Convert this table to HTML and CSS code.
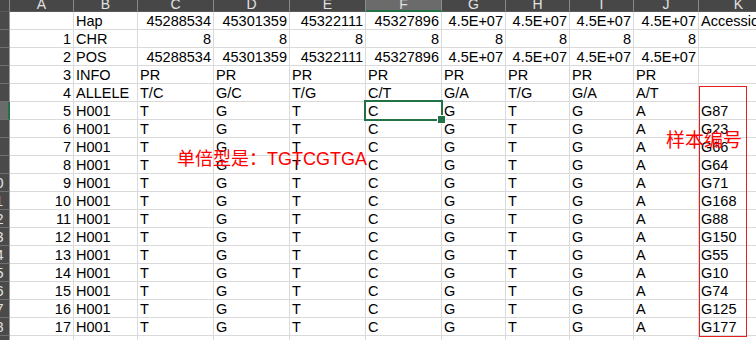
FILE: index.html
```html
<!DOCTYPE html>
<html>
<head>
<meta charset="utf-8">
<link rel="stylesheet" href="styles.css">
</head>
<body>
<div class="sheet">
  <div class="row hdr">
    <div class="corner"></div>
    <div class="ch">A</div><div class="ch">B</div><div class="ch">C</div><div class="ch">D</div><div class="ch">E</div><div class="ch sel">F</div><div class="ch">G</div><div class="ch">H</div><div class="ch">I</div><div class="ch">J</div><div class="ch">K</div>
  </div>
  <div class="row">
    <div class="rh"><span>1</span></div>
    <div class="c"></div><div class="c">Hap</div><div class="c n">45288534</div><div class="c n">45301359</div><div class="c n">45322111</div><div class="c n">45327896</div><div class="c n">4.5E+07</div><div class="c n">4.5E+07</div><div class="c n">4.5E+07</div><div class="c n">4.5E+07</div><div class="c">Accession</div>
  </div>
  <div class="row">
    <div class="rh"><span>2</span></div>
    <div class="c n">1</div><div class="c">CHR</div><div class="c n">8</div><div class="c n">8</div><div class="c n">8</div><div class="c n">8</div><div class="c n">8</div><div class="c n">8</div><div class="c n">8</div><div class="c n">8</div><div class="c"></div>
  </div>
  <div class="row">
    <div class="rh"><span>3</span></div>
    <div class="c n">2</div><div class="c">POS</div><div class="c n">45288534</div><div class="c n">45301359</div><div class="c n">45322111</div><div class="c n">45327896</div><div class="c n">4.5E+07</div><div class="c n">4.5E+07</div><div class="c n">4.5E+07</div><div class="c n">4.5E+07</div><div class="c"></div>
  </div>
  <div class="row">
    <div class="rh"><span>4</span></div>
    <div class="c n">3</div><div class="c">INFO</div><div class="c">PR</div><div class="c">PR</div><div class="c">PR</div><div class="c">PR</div><div class="c">PR</div><div class="c">PR</div><div class="c">PR</div><div class="c">PR</div><div class="c"></div>
  </div>
  <div class="row">
    <div class="rh"><span>5</span></div>
    <div class="c n">4</div><div class="c">ALLELE</div><div class="c">T/C</div><div class="c">G/C</div><div class="c">T/G</div><div class="c">C/T</div><div class="c">G/A</div><div class="c">T/G</div><div class="c">G/A</div><div class="c">A/T</div><div class="c"></div>
  </div>
  <div class="row">
    <div class="rh sel"><span>6</span></div>
    <div class="c n">5</div><div class="c">H001</div><div class="c">T</div><div class="c">G</div><div class="c">T</div><div class="c act">C</div><div class="c">G</div><div class="c">T</div><div class="c">G</div><div class="c">A</div><div class="c">G87</div>
  </div>
  <div class="row">
    <div class="rh"><span>7</span></div>
    <div class="c n">6</div><div class="c">H001</div><div class="c">T</div><div class="c">G</div><div class="c">T</div><div class="c">C</div><div class="c">G</div><div class="c">T</div><div class="c">G</div><div class="c">A</div><div class="c">G23</div>
  </div>
  <div class="row">
    <div class="rh"><span>8</span></div>
    <div class="c n">7</div><div class="c">H001</div><div class="c">T</div><div class="c">G</div><div class="c">T</div><div class="c">C</div><div class="c">G</div><div class="c">T</div><div class="c">G</div><div class="c">A</div><div class="c">G66</div>
  </div>
  <div class="row">
    <div class="rh"><span>9</span></div>
    <div class="c n">8</div><div class="c">H001</div><div class="c">T</div><div class="c">G</div><div class="c">T</div><div class="c">C</div><div class="c">G</div><div class="c">T</div><div class="c">G</div><div class="c">A</div><div class="c">G64</div>
  </div>
  <div class="row">
    <div class="rh"><span>10</span></div>
    <div class="c n">9</div><div class="c">H001</div><div class="c">T</div><div class="c">G</div><div class="c">T</div><div class="c">C</div><div class="c">G</div><div class="c">T</div><div class="c">G</div><div class="c">A</div><div class="c">G71</div>
  </div>
  <div class="row">
    <div class="rh"><span>11</span></div>
    <div class="c n">10</div><div class="c">H001</div><div class="c">T</div><div class="c">G</div><div class="c">T</div><div class="c">C</div><div class="c">G</div><div class="c">T</div><div class="c">G</div><div class="c">A</div><div class="c">G168</div>
  </div>
  <div class="row">
    <div class="rh"><span>12</span></div>
    <div class="c n">11</div><div class="c">H001</div><div class="c">T</div><div class="c">G</div><div class="c">T</div><div class="c">C</div><div class="c">G</div><div class="c">T</div><div class="c">G</div><div class="c">A</div><div class="c">G88</div>
  </div>
  <div class="row">
    <div class="rh"><span>13</span></div>
    <div class="c n">12</div><div class="c">H001</div><div class="c">T</div><div class="c">G</div><div class="c">T</div><div class="c">C</div><div class="c">G</div><div class="c">T</div><div class="c">G</div><div class="c">A</div><div class="c">G150</div>
  </div>
  <div class="row">
    <div class="rh"><span>14</span></div>
    <div class="c n">13</div><div class="c">H001</div><div class="c">T</div><div class="c">G</div><div class="c">T</div><div class="c">C</div><div class="c">G</div><div class="c">T</div><div class="c">G</div><div class="c">A</div><div class="c">G55</div>
  </div>
  <div class="row">
    <div class="rh"><span>15</span></div>
    <div class="c n">14</div><div class="c">H001</div><div class="c">T</div><div class="c">G</div><div class="c">T</div><div class="c">C</div><div class="c">G</div><div class="c">T</div><div class="c">G</div><div class="c">A</div><div class="c">G10</div>
  </div>
  <div class="row">
    <div class="rh"><span>16</span></div>
    <div class="c n">15</div><div class="c">H001</div><div class="c">T</div><div class="c">G</div><div class="c">T</div><div class="c">C</div><div class="c">G</div><div class="c">T</div><div class="c">G</div><div class="c">A</div><div class="c">G74</div>
  </div>
  <div class="row">
    <div class="rh"><span>17</span></div>
    <div class="c n">16</div><div class="c">H001</div><div class="c">T</div><div class="c">G</div><div class="c">T</div><div class="c">C</div><div class="c">G</div><div class="c">T</div><div class="c">G</div><div class="c">A</div><div class="c">G125</div>
  </div>
  <div class="row">
    <div class="rh"><span>18</span></div>
    <div class="c n">17</div><div class="c">H001</div><div class="c">T</div><div class="c">G</div><div class="c">T</div><div class="c">C</div><div class="c">G</div><div class="c">T</div><div class="c">G</div><div class="c">A</div><div class="c">G177</div>
  </div>
  <div class="row">
    <div class="rh"><span>19</span></div>
    <div class="c"></div><div class="c"></div><div class="c"></div><div class="c"></div><div class="c"></div><div class="c"></div><div class="c"></div><div class="c"></div><div class="c"></div><div class="c"></div><div class="c"></div>
  </div>

  <div class="note note1">单倍型是：TGTCGTGA</div>
  <div class="note note2">样本编号</div>
  <div class="redbox"></div>
</div>
</body>
</html>
```
FILE: styles.css
```css
* { box-sizing: border-box; }
html, body { margin: 0; padding: 0; background: #fff; overflow: hidden; }
body { width: 756px; height: 340px; font-family: "Liberation Sans", Arial, sans-serif; }

.sheet { position: relative; width: 756px; height: 340px; overflow: hidden; }

.row {
  display: grid;
  grid-template-columns: 10px 64px 64px 76px 76px 76px 76px 64px 64px 64px 65px 80px;
  height: 18px;
}
.row.hdr { height: 12px; }

.corner { background: #474747; border-right: 1px solid #8a8a8a; border-bottom: 1px solid #5a5a5a; }

.ch {
  background: #474747;
  color: #e2e2e2;
  border-right: 1px solid #8a8a8a;
  border-bottom: 1px solid #5a5a5a;
  font-size: 14px;
  line-height: 8px;
  text-align: center;
  overflow: hidden;
  height: 12px;
}
.ch.sel { background: #6b6b6b; border-bottom: 2px solid #217346; }

.rh {
  background: #4a4a4a;
  color: #e2e2e2;
  border-right: 1px solid #9a9a9a;
  border-bottom: 1px solid #707070;
  overflow: hidden;
  font-size: 14.5px;
  line-height: 15px;
  padding-top: 2px;
}
.rh span { display: block; width: 27px; margin-left: -18px; text-align: center; white-space: nowrap; }
.rh.sel { background: #6b6b6b; border-right: 2px solid #217346; }

.c {
  border-right: 1px solid #dadada;
  border-bottom: 1px solid #dadada;
  font-size: 14.5px;
  line-height: 15px;
  padding: 2px 2px 0 2px;
  white-space: nowrap;
  color: #000;
}
.c.n { text-align: right; padding-right: 2px; }

.c.act { position: relative; }
.c.act::after {
  content: "";
  position: absolute;
  left: -2px; top: -2px; right: -2px; bottom: -2px;
  border: 2px solid #217346;
}
.c.act::before {
  content: "";
  position: absolute;
  right: -5px; bottom: -5px;
  width: 7px; height: 7px;
  background: #217346;
  border: 1px solid #fff;
  z-index: 2;
}

.note {
  position: absolute;
  color: #ff0000;
  font-family: "Liberation Sans", "Noto Sans CJK SC", sans-serif;
  white-space: nowrap;
  line-height: 1;
}
.note1 { left: 177px; top: 150px; font-size: 18px; }
.note2 { left: 666px; top: 131px; font-size: 19px; }

.redbox {
  position: absolute;
  left: 699px; top: 86px;
  width: 48px; height: 251px;
  border: 1px solid #e51f1f;
}
```
